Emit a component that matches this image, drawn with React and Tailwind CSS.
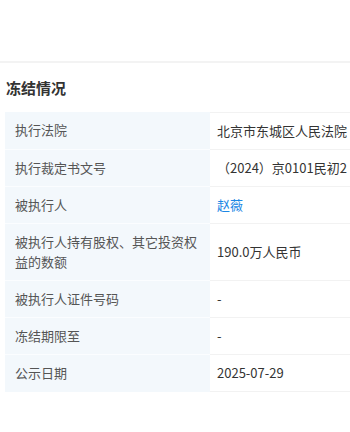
export default function App() {
  const rows = [
    { label: "执行法院", value: "北京市东城区人民法院" },
    { label: "执行裁定书文号", value: "（2024）京0101民初2" },
    { label: "被执行人", value: "赵薇", link: true },
    { label: "被执行人持有股权、其它投资权益的数额", value: "190.0万人民币" },
    { label: "被执行人证件号码", value: "-" },
    { label: "冻结期限至", value: "-" },
    { label: "公示日期", value: "2025-07-29" },
  ];
  return (
    <div
      className="w-[350px] h-[432px] bg-white overflow-hidden"
      style={{ fontFamily: '"Noto Sans CJK SC", "Noto Sans", sans-serif' }}
    >
      <div className="h-[61px]" />
      <div className="h-[2px] bg-[#f3f3f3]" />
      <div className="pl-[6px] pt-[14px] pb-[13px] text-[15px] leading-[22px] font-bold text-[#333]">
        冻结情况
      </div>
      <div className="ml-[5px] w-[400px]">
        {rows.map((r, i) => (
          <div key={i} className="flex">
            <div
              className={`w-[205px] shrink-0 bg-[#f3f8fc] pl-[10px] pr-[10px] py-[8px] text-[13px] leading-[20px] text-[#555] ${
                i < rows.length - 1 ? "border-b border-[#fbfdff]" : ""
              }`}
            >
              {r.label}
            </div>
            <div
              className={`flex-1 flex items-center pl-[7px] py-[8px] text-[13px] leading-[20px] whitespace-nowrap ${
                r.link ? "text-[#1e88e5]" : "text-[#333]"
              } border-b border-[#f2f2f2] ${i === 0 ? "border-t" : ""}`}
            >
              {r.value}
            </div>
          </div>
        ))}
      </div>
    </div>
  );
}
